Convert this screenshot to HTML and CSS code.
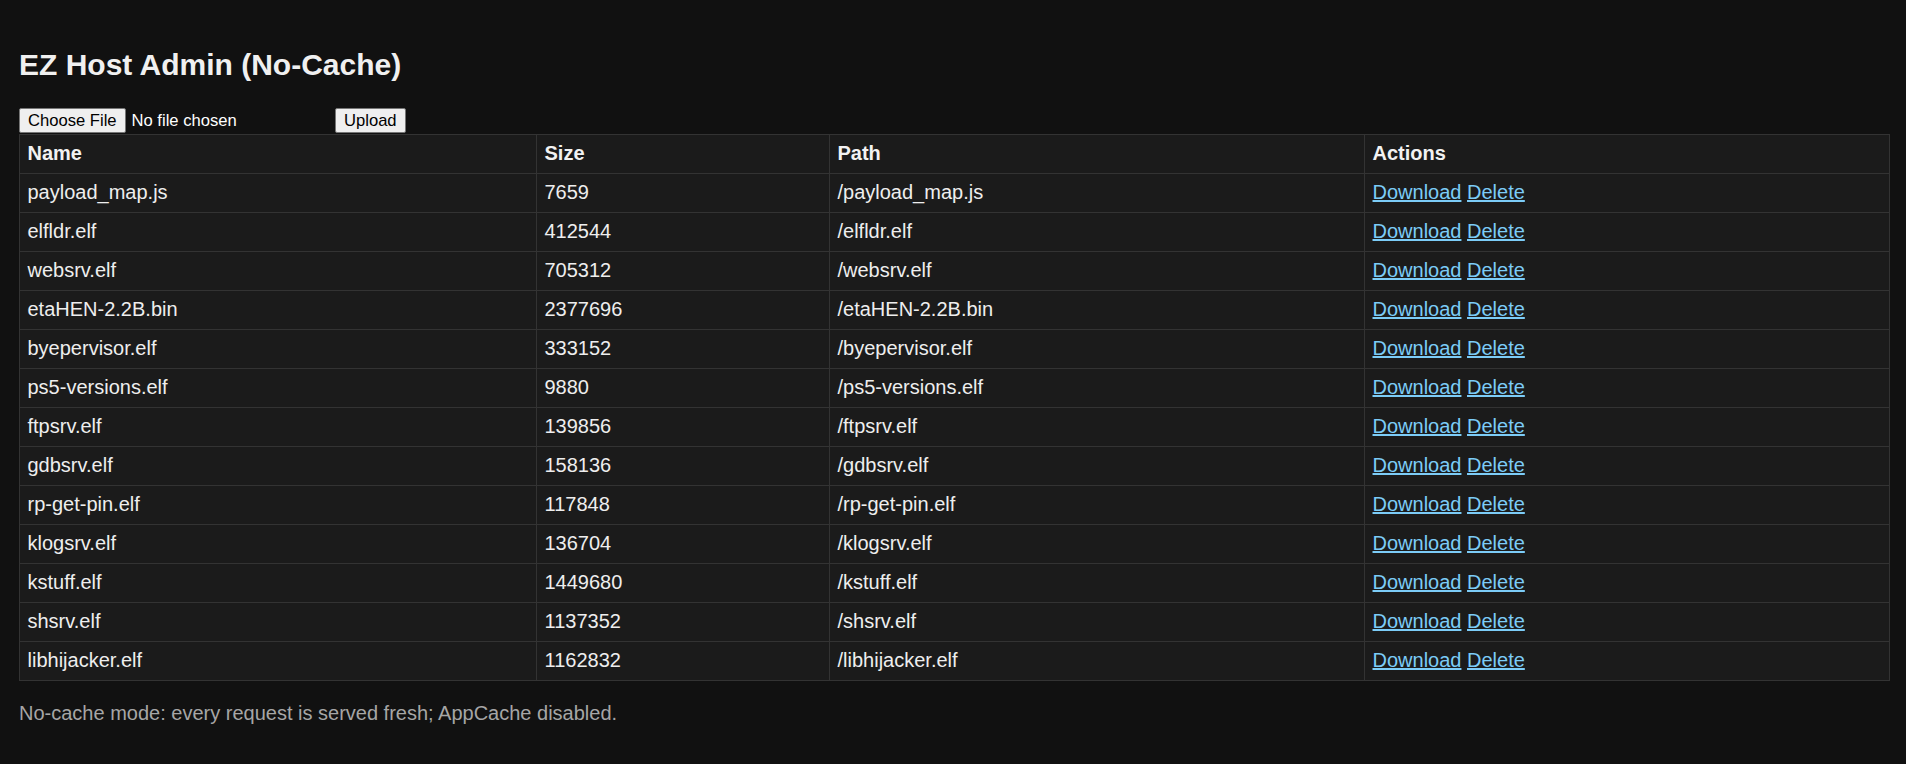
FILE: index.html
```html
<!DOCTYPE html>
<html lang="en">
<head>
<meta charset="utf-8">
<title>EZ Host Admin (No-Cache)</title>
<link rel="stylesheet" href="styles.css">
</head>
<body>
<main class="page">
  <h1 class="title">EZ Host Admin (No-Cache)</h1>
  <form class="upload-form">
    <div class="file-input">
      <span class="btn">Choose File</span>
      <span class="file-name">No file chosen</span>
    </div>
    <button type="button" class="btn">Upload</button>
  </form>
  <table class="files">
    <colgroup>
      <col class="c-name">
      <col class="c-size">
      <col class="c-path">
      <col class="c-actions">
    </colgroup>
    <thead>
      <tr><th>Name</th><th>Size</th><th>Path</th><th>Actions</th></tr>
    </thead>
    <tbody>
      <tr><td>payload_map.js</td><td>7659</td><td>/payload_map.js</td><td><a href="#">Download</a> <a href="#">Delete</a></td></tr>
      <tr><td>elfldr.elf</td><td>412544</td><td>/elfldr.elf</td><td><a href="#">Download</a> <a href="#">Delete</a></td></tr>
      <tr><td>websrv.elf</td><td>705312</td><td>/websrv.elf</td><td><a href="#">Download</a> <a href="#">Delete</a></td></tr>
      <tr><td>etaHEN-2.2B.bin</td><td>2377696</td><td>/etaHEN-2.2B.bin</td><td><a href="#">Download</a> <a href="#">Delete</a></td></tr>
      <tr><td>byepervisor.elf</td><td>333152</td><td>/byepervisor.elf</td><td><a href="#">Download</a> <a href="#">Delete</a></td></tr>
      <tr><td>ps5-versions.elf</td><td>9880</td><td>/ps5-versions.elf</td><td><a href="#">Download</a> <a href="#">Delete</a></td></tr>
      <tr><td>ftpsrv.elf</td><td>139856</td><td>/ftpsrv.elf</td><td><a href="#">Download</a> <a href="#">Delete</a></td></tr>
      <tr><td>gdbsrv.elf</td><td>158136</td><td>/gdbsrv.elf</td><td><a href="#">Download</a> <a href="#">Delete</a></td></tr>
      <tr><td>rp-get-pin.elf</td><td>117848</td><td>/rp-get-pin.elf</td><td><a href="#">Download</a> <a href="#">Delete</a></td></tr>
      <tr><td>klogsrv.elf</td><td>136704</td><td>/klogsrv.elf</td><td><a href="#">Download</a> <a href="#">Delete</a></td></tr>
      <tr><td>kstuff.elf</td><td>1449680</td><td>/kstuff.elf</td><td><a href="#">Download</a> <a href="#">Delete</a></td></tr>
      <tr><td>shsrv.elf</td><td>1137352</td><td>/shsrv.elf</td><td><a href="#">Download</a> <a href="#">Delete</a></td></tr>
      <tr><td>libhijacker.elf</td><td>1162832</td><td>/libhijacker.elf</td><td><a href="#">Download</a> <a href="#">Delete</a></td></tr>
    </tbody>
  </table>
  <p class="note">No-cache mode: every request is served fresh; AppCache disabled.</p>
</main>
</body>
</html>
```

FILE: styles.css
```css
html, body {
  margin: 0;
  padding: 0;
  background: #111111;
}

body {
  color: #eeeeee;
  font-family: "Liberation Sans", Arial, sans-serif;
  font-size: 20px;
  line-height: 23px;
}

.page {
  padding: 48px 17px 20px 19px;
}

.title {
  margin: 0 0 26px 0;
  font-size: 30px;
  line-height: 34px;
  font-weight: bold;
  color: #f0f0f0;
}

.upload-form {
  display: flex;
  align-items: center;
  height: 25px;
  margin: 0 0 0.5px 0;
}

.file-input {
  display: flex;
  align-items: center;
  width: 316px;
}

.btn {
  display: inline-flex;
  align-items: center;
  box-sizing: border-box;
  height: 25px;
  padding: 0 8px;
  border: 1px solid #767676;
  border-radius: 2px;
  background: #efefef;
  color: #000000;
  font-family: "Liberation Sans", Arial, sans-serif;
  font-size: 16.6px;
  line-height: 19px;
}

.file-name {
  margin-left: 6px;
  font-size: 16.6px;
  line-height: 19px;
  color: #ffffff;
}

.files {
  width: 100%;
  table-layout: fixed;
  border-collapse: collapse;
  background: #1b1b1b;
}

.c-name { width: 517px; }
.c-size { width: 293px; }
.c-path { width: 535px; }
.c-actions { width: 525px; }

.files th,
.files td {
  border: 1px solid #333333;
  padding: 7.5px 7.5px;
  text-align: left;
  white-space: nowrap;
}

.files th {
  font-weight: bold;
  color: #f2f2f2;
}

.files a {
  color: #7cccf7;
  text-decoration: underline;
}

.note {
  margin: 21px 0 0 0;
  color: #a6a6a6;
}
```
